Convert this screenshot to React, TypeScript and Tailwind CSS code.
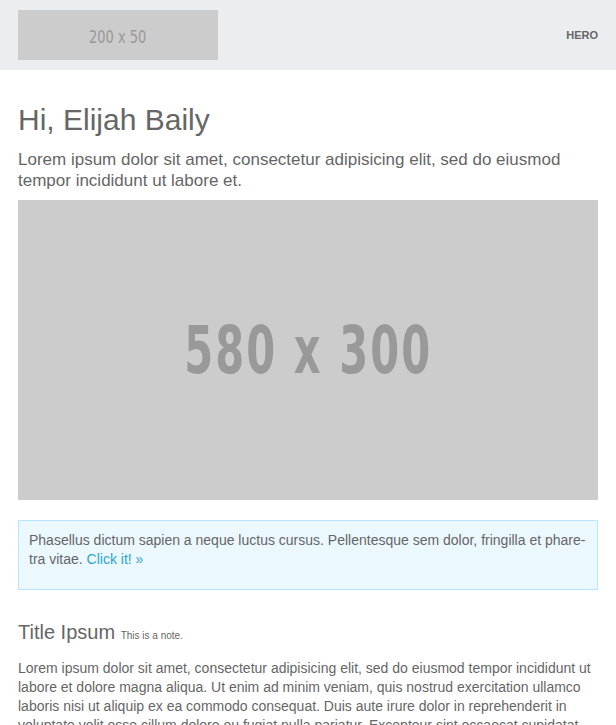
import React from "react";

const sans = "font-['Liberation_Sans','Helvetica',Arial,sans-serif]";
const narrow = "font-['DejaVu_Sans_Condensed','DejaVu_Sans',sans-serif]";

function Placeholder({ label, className, textClass }: { label: string; className: string; textClass: string }) {
  return (
    <div className={`bg-[#cccccc] flex items-center justify-center overflow-hidden ${className}`}>
      <span className={`${narrow} text-[#999999] whitespace-nowrap ${textClass}`}>{label}</span>
    </div>
  );
}

export default function App() {
  return (
    <div className={`${sans} bg-white min-h-screen text-[#666666]`}>
      {/* Header */}
      <header className="bg-[#ebeef0] h-[70px] px-[18px] flex items-center justify-between">
        <Placeholder
          label="200 x 50"
          className="w-[200px] h-[50px] pt-[5px]"
          textClass="text-[17px] scale-x-[0.85]"
        />
        <a className="text-[11px] font-bold text-[#666666] leading-none">HERO</a>
      </header>

      {/* Content */}
      <main className="px-[18px] pt-[30px]">
        <h1 className="text-[30px] leading-[39px] mb-[10px] font-normal">Hi, Elijah Baily</h1>
        <p className="text-[17px] leading-[21px] mb-[9px]">
          Lorem ipsum dolor sit amet, consectetur adipisicing elit, sed do eiusmod tempor incididunt ut labore et.
        </p>

        <Placeholder
          label="580 x 300"
          className="w-full h-[300px]"
          textClass="text-[66px] font-bold scale-x-[0.7] tracking-[3px]"
        />

        <div className="mt-[20px] bg-[#ecf8ff] border border-[#b9e5ff] p-[10px]">
          <p className="text-[14px] leading-[19px] mb-[10px]">
            Phasellus dictum sapien a neque luctus cursus. Pellentesque sem dolor, fringilla et phare{"\u00AD"}tra vitae.{" "}
            <a className="text-[#2ba6cb]">Click it! »</a>
          </p>
        </div>

        <h3 className="mt-[29px] text-[20px] leading-[26px] mb-[10px] font-normal">
          Title Ipsum <small className="text-[10px]">This is a note.</small>
        </h3>
        <p className="text-[14px] leading-[19px] pb-[20px]">
          Lorem ipsum dolor sit amet, consectetur adipisicing elit, sed do eiusmod tempor incididunt ut labore et dolore
          magna aliqua. Ut enim ad minim veniam, quis nostrud exercitation ullamco laboris nisi ut aliquip ex ea commodo
          consequat. Duis aute irure dolor in reprehenderit in voluptate velit esse cillum dolore eu fugiat nulla pariatur.
          Excepteur sint occaecat cupidatat non proident, sunt in culpa qui officia deserunt mollit anim id est laborum.
        </p>
      </main>
    </div>
  );
}
